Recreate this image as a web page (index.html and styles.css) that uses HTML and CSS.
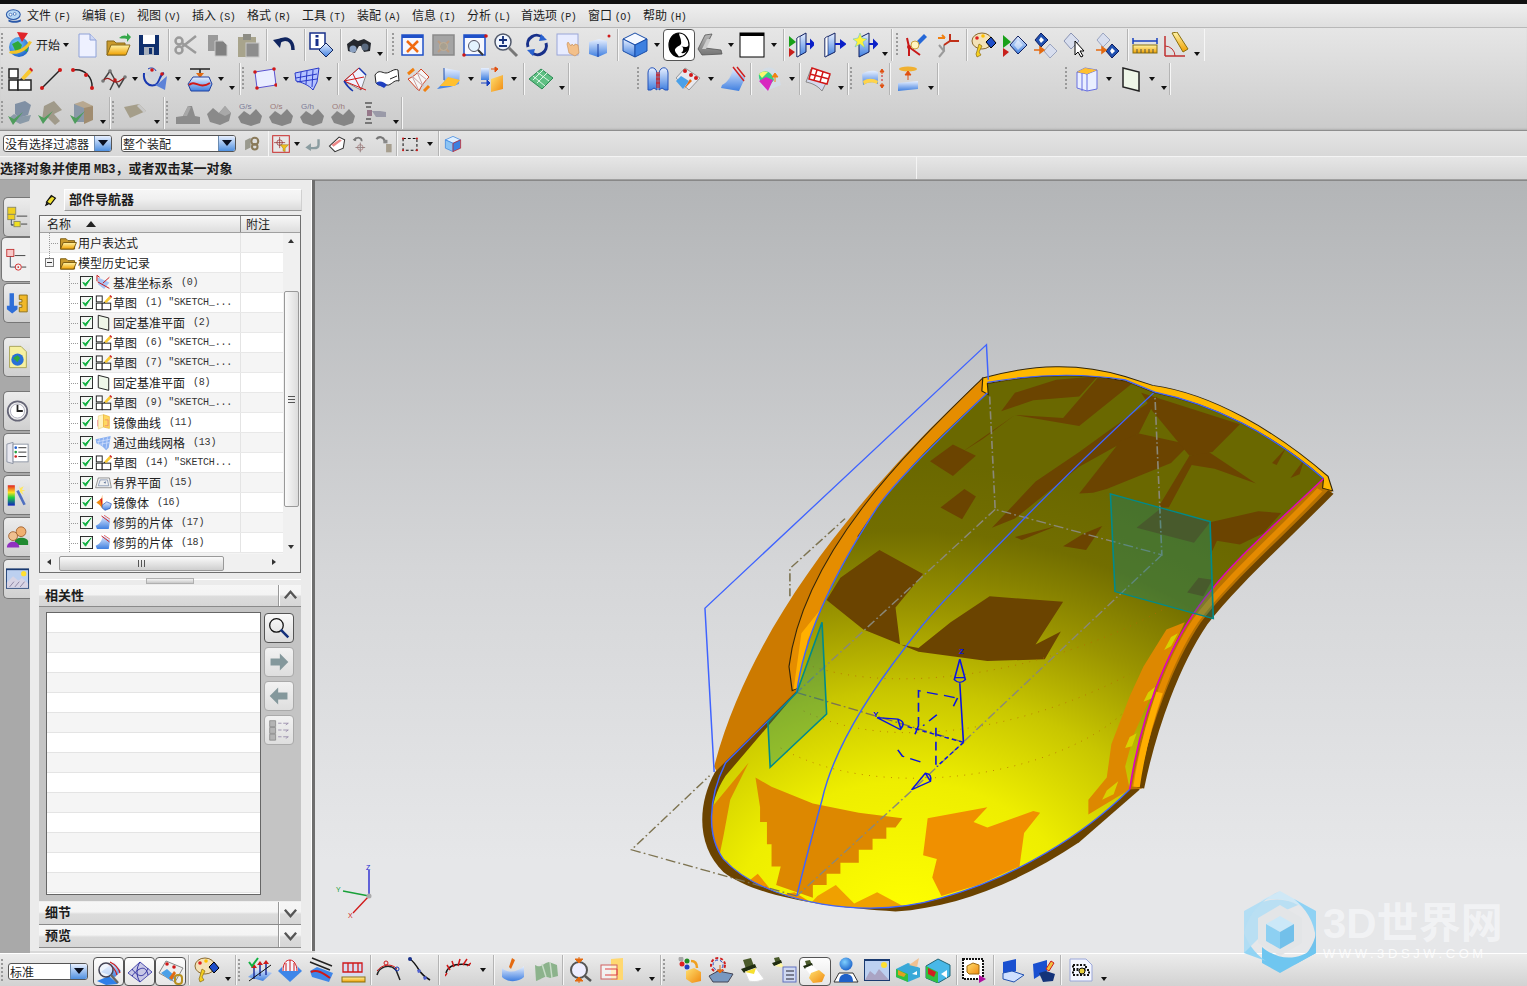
FILE: index.html
```html
<!DOCTYPE html>
<html lang="zh">
<head>
<meta charset="utf-8">
<title>NX 部件导航器</title>
<link rel="stylesheet" href="styles.css">
</head>
<body>
<svg class="defs" aria-hidden="true">
<defs>
<linearGradient id="gB" x1="0" y1="0" x2="0" y2="1"><stop offset="0" stop-color="#e8f0ff"/><stop offset="1" stop-color="#3f7fe0"/></linearGradient>
<linearGradient id="gY" x1="0" y1="0" x2="0" y2="1"><stop offset="0" stop-color="#fff4a8"/><stop offset="1" stop-color="#f0a000"/></linearGradient>
<linearGradient id="gG" x1="0" y1="0" x2="0" y2="1"><stop offset="0" stop-color="#b8b8b8"/><stop offset="1" stop-color="#757575"/></linearGradient>
<linearGradient id="gO" x1="0" y1="0" x2="1" y2="1"><stop offset="0" stop-color="#ffe070"/><stop offset="1" stop-color="#f08a10"/></linearGradient>
<radialGradient id="gW" cx=".4" cy=".35" r=".8"><stop offset="0" stop-color="#7fd0ff"/><stop offset="1" stop-color="#0b4fc0"/></radialGradient>
<symbol id="fold2" viewBox="0 0 18 16"><path d="M1 15V4h6l2 2h7v9z" fill="#c99a2c" stroke="#7a5a10"/><path d="M1 15l3-7h14l-3 7z" fill="url(#gY)" stroke="#7a5a10"/></symbol>
<symbol id="logo" viewBox="0 0 26 26"><circle cx="12" cy="15" r="10" fill="url(#gW)"/><path d="M5 12l6-3 4 4-2 6-4 2-2-5zM17 18l4-3-1 5z" fill="#2fa83a"/><path d="M10 0l11 1-6 9z" fill="#e0242a"/><path d="M2 21c8 3 18-2 23-11l-3-1c-3 6-10 10-19 10z" fill="#f3c428"/></symbol>
<symbol id="doc" viewBox="0 0 26 26"><path d="M5 2h11l6 6v17H5z" fill="#eef1ff" stroke="#8fa2d8"/><path d="M16 2v6h6" fill="#cfd8f4" stroke="#8fa2d8"/></symbol>
<symbol id="fold" viewBox="0 0 26 26"><path d="M2 23V9h7l2 2h9v12z" fill="#c99a2c" stroke="#8a6a1a"/><path d="M2 23l4-10h19l-4 10z" fill="url(#gY)" stroke="#8a6a1a"/><path d="M14 6c3-3 6-3 8-2V1l4 4-4 5V7c-3-1-5 0-8-1z" fill="#35a84a"/></symbol>
<symbol id="save" viewBox="0 0 26 26"><rect x="3" y="3" width="20" height="20" fill="#10306e"/><rect x="7" y="3" width="12" height="9" fill="#fff"/><rect x="8" y="15" width="10" height="8" fill="#a8b0bc"/><rect x="13" y="16" width="3" height="6" fill="#10306e"/></symbol>
<symbol id="cut" viewBox="0 0 26 26"><g fill="none" stroke="#9a9a9a" stroke-width="2.500"><path d="M9 15L23 4M9 11l14 10"/><circle cx="6" cy="9" r="3.500"/><circle cx="6" cy="18" r="3.500"/></g></symbol>
<symbol id="copy" viewBox="0 0 26 26"><path d="M4 3h10v16H4z" fill="#9a9a9a"/><path d="M11 9h8l4 4v11H11z" fill="#808080" stroke="#c8c8c8"/></symbol>
<symbol id="paste" viewBox="0 0 26 26"><rect x="3" y="5" width="18" height="20" fill="#a8a48c"/><rect x="8" y="2" width="8" height="6" fill="#8c8c84"/><rect x="11" y="11" width="13" height="14" fill="#8d8d8d" stroke="#c8c8c8"/></symbol>
<symbol id="undo" viewBox="0 0 26 26"><path d="M7 10c8-6 15-2 15 8" fill="none" stroke="#10255f" stroke-width="3.500"/><path d="M2 8l9-2-2 10z" fill="#10255f"/></symbol>
<symbol id="info" viewBox="0 0 26 26"><rect x="1" y="1" width="15" height="16" fill="#fff" stroke="#18308a" stroke-width="1.500"/><rect x="6.500" y="3" width="3" height="2.500" fill="#18308a"/><rect x="6.500" y="7" width="3" height="7" fill="#18308a"/><path d="M17 11l7 7-7 7-7-7z" fill="url(#gB)" stroke="#10255f"/></symbol>
<symbol id="bino" viewBox="0 0 26 26"><path d="M1 12l7-5 4 2 3-1 3-1 7 4-1 8-6 1-3-6h-2l-4 7-7-2z" fill="#25282e"/><circle cx="7" cy="17" r="3.500" fill="#8aa0c0"/><circle cx="19" cy="15" r="3.500" fill="#5a6a80"/></symbol>
<symbol id="fit" viewBox="0 0 26 26"><rect x="2" y="3" width="21" height="20" fill="#f4f6ff" stroke="#1f50c8" stroke-width="1.500"/><rect x="2" y="3" width="21" height="3" fill="#1f50c8"/><path d="M7 9l11 11M18 9L7 20" stroke="#f06a10" stroke-width="2.500"/></symbol>
<symbol id="fitg" viewBox="0 0 26 26"><rect x="2" y="3" width="21" height="20" fill="#a4a4a4" stroke="#8a8a8a" stroke-width="1.500"/><path d="M7 9l11 11M18 9L7 20" stroke="#bd9c80" stroke-width="2"/><circle cx="12.500" cy="14.500" r="4" fill="#a8a090" stroke="#c0b098"/></symbol>
<symbol id="zr" viewBox="0 0 26 26"><rect x="2" y="3" width="21" height="20" fill="#f6f8ff" stroke="#1f50c8" stroke-width="1.500"/><rect x="2" y="3" width="21" height="3" fill="#1f50c8"/><circle cx="12" cy="14" r="5.500" fill="#e4f4ff" stroke="#556"/><path d="M16 18l5 5" stroke="#333" stroke-width="2"/><circle cx="24" cy="4" r="1.800" fill="#d01818"/><circle cx="2" cy="23" r="1.800" fill="#d01818"/></symbol>
<symbol id="zm" viewBox="0 0 26 26"><circle cx="10" cy="10" r="8" fill="#f0f6ff" stroke="#50586a" stroke-width="1.500"/><path d="M6 8h8M10 4v8M6 14h8" stroke="#14307a" stroke-width="1.800"/><path d="M16 16l8 8" stroke="#777" stroke-width="3"/></symbol>
<symbol id="rot" viewBox="0 0 26 26"><path d="M4 15a9 9 0 0 1 15-9" fill="none" stroke="#18308a" stroke-width="3"/><path d="M22 11a9 9 0 0 1-15 9" fill="none" stroke="#18308a" stroke-width="3"/><path d="M17 2l6 6-8 1zM9 24l-6-6 8-1z" fill="#2a62d0"/></symbol>
<symbol id="pan" viewBox="0 0 26 26"><rect x="2" y="2" width="21" height="21" fill="#e8ecff" stroke="#9aa6d8"/><path d="M12 12l2 9 6 3 4-3-1-8-3-1-1 2-2-2-1 2-3-4z" fill="#f3c08a" stroke="#c68c50" stroke-width=".6"/></symbol>
<symbol id="psp" viewBox="0 0 26 26"><path d="M3 10l10-3 8 2v12l-9 4-9-3z" fill="url(#gB)"/><path d="M12 12v13" stroke="#1a3fa0"/><circle cx="23" cy="4" r="1.500" fill="#d01818"/></symbol>
<symbol id="cube" viewBox="0 0 26 26"><path d="M13 1l12 6-12 6L1 7z" fill="#f4f8ff" stroke="#184ca8"/><path d="M1 7l12 6v12L1 19z" fill="url(#gB)" stroke="#184ca8"/><path d="M25 7l-12 6v12l12-6z" fill="#3d80e0" stroke="#184ca8"/></symbol>
<symbol id="ctr" viewBox="0 0 26 26"><ellipse cx="13" cy="13" rx="10" ry="12" fill="#fff" stroke="#000" stroke-width="1.200"/><path d="M13 1a10 12 0 0 0 0 24c-2-4-6-6-3-9s6-2 5-7c0-3-2-5-2-8z" fill="#000"/><path d="M15 14c3 1 3 5 0 7 6 1 8-4 8-8-2 3-5 2-8 1z" fill="#000"/></symbol>
<symbol id="shd" viewBox="0 0 26 26"><path d="M8 3l7-1-7 14 16 2 1 4-20 1-4-6z" fill="url(#gG)" stroke="#555" stroke-width=".8"/><path d="M5 17l5-10h4L9 17z" fill="#ccc"/></symbol>
<symbol id="wb" viewBox="0 0 26 26"><rect x="1" y="1" width="24" height="24" fill="#fff" stroke="#000"/><rect x="1" y="1" width="24" height="3" fill="#000"/></symbol>
<symbol id="p1" viewBox="0 0 26 26"><path d="M9 6l9-5v19l-9 5z" fill="url(#gB)" stroke="#0e1e60"/><path d="M9 6l3-2v19l-3 2z" fill="#fff" stroke="#0e1e60" stroke-width=".6"/><path d="M1 4l7 6-7 5z" fill="#19a019"/><path d="M1 16l6 4-6 5z" fill="#c8201c"/><path d="M18 12h5M23 9l3 3-3 3z" stroke="#0b20c8" fill="#0b20c8" stroke-width="2"/></symbol>
<symbol id="p2" viewBox="0 0 26 26"><path d="M5 6l10-5v19L5 25z" fill="url(#gB)" stroke="#0e1e60"/><path d="M5 6l3-2v19l-3 2z" fill="#fff" stroke="#0e1e60" stroke-width=".6"/><path d="M15 12h6M21 9l4 3-4 3z" stroke="#0b20c8" fill="#0b20c8" stroke-width="2"/></symbol>
<symbol id="p3" viewBox="0 0 26 26"><path d="M7 6l10-5v19L7 25z" fill="url(#gB)" stroke="#0e1e60"/><path d="M17 12h5M22 9l3 3-3 3z" stroke="#0b20c8" fill="#0b20c8" stroke-width="2"/><path d="M8 1l2 5 5 1-4 3 2 6-5-4-5 3 2-5-4-3 5-1z" fill="#fff23a" stroke="#50c0d0" stroke-width=".5"/></symbol>
<symbol id="c1" viewBox="0 0 26 26"><path d="M6 15v9M6 15l11 8M6 15l-2-9" stroke="#c81818" stroke-width="2" fill="none"/><circle cx="6" cy="15" r="2" fill="#c81818"/><path d="M12 11l9-9 3 3-9 9z" fill="#2668d8"/><circle cx="12" cy="13" r="4" fill="#fff5c0" stroke="#c8a040"/></symbol>
<symbol id="c2" viewBox="0 0 26 26"><path d="M4 13l5 6-5 6M9 19V13" stroke="#9a9a9a" stroke-width="2" fill="none"/><path d="M9 13l6-4h9M15 9V2" stroke="#c03018" stroke-width="2" fill="none"/><path d="M3 6h7M10 6l-3-3" stroke="#f08010" stroke-width="2"/></symbol>
<symbol id="pal" viewBox="0 0 26 26"><ellipse cx="11" cy="9" rx="10" ry="8" fill="#f3e2b8" stroke="#8a6a30"/><circle cx="6" cy="6" r="1.800" fill="#e02020"/><circle cx="12" cy="4" r="1.800" fill="#ffc000"/><path d="M15 10l5-5 5 6-5 5z" fill="#1f4ec8" stroke="#000"/><path d="M8 12l3 2-3 6 2 3-4 2-1-3 1-3z" fill="#f6d020" stroke="#8a6a10" stroke-width=".7"/></symbol>
<symbol id="d1" viewBox="0 0 26 26"><path d="M1 3l8 7-8 6z" fill="#19a019"/><path d="M1 16l6 4-6 5z" fill="#c8201c"/><path d="M16 4l9 9-9 9-8-9z" fill="url(#gB)" stroke="#0e1e60"/><path d="M16 8l5 5-5 5-4-5z" fill="#fff" opacity=".5"/></symbol>
<symbol id="d2" viewBox="0 0 26 26"><path d="M9 1l7 7-7 7-6-7z" fill="#2050b0" stroke="#0e1e60"/><path d="M9 5l3 3-3 3-2-3z" fill="#fff"/><path d="M18 12l7 7-7 7-6-7z" fill="#d8deee" stroke="#9aa4c0"/><path d="M2 18h8M8 15l4 3-4 3z" stroke="#e46a10" fill="#e46a10" stroke-width="1.500"/></symbol>
<symbol id="d3" viewBox="0 0 26 26"><path d="M8 1l8 8-8 8-7-8z" fill="#d8deee" stroke="#8a94b4"/><path d="M12 9v14l3-3 3 5 2-1-3-5h4z" fill="#fff" stroke="#000"/></symbol>
<symbol id="d4" viewBox="0 0 26 26"><path d="M9 1l7 7-7 7-6-7z" fill="#d8deee" stroke="#9aa4c0"/><path d="M18 12l7 7-7 7-6-7z" fill="#2050b0" stroke="#0e1e60"/><path d="M18 16l3 3-3 3-2-3z" fill="#fff"/><path d="M2 18h8M8 15l4 3-4 3z" stroke="#e46a10" fill="#e46a10" stroke-width="1.500"/></symbol>
<symbol id="rul" viewBox="0 0 26 26"><rect x="1" y="13" width="24" height="8" fill="url(#gY)" stroke="#8a7010"/><path d="M5 17v4M9 17v4M13 17v4M17 17v4M21 17v4" stroke="#554"/><path d="M1 9h24M1 6v6M25 6v6" stroke="#1840c0" stroke-width="1.500"/></symbol>
<symbol id="ang" viewBox="0 0 26 26"><path d="M2 24V4M2 24h20" stroke="#c03030" stroke-width="1.500"/><path d="M2 14a10 10 0 0 1 10 10" fill="none" stroke="#c03030"/><path d="M9 1l5-1 11 17-5 3z" fill="url(#gY)" stroke="#8a7010"/></symbol>

<symbol id="sk" viewBox="0 0 26 26"><rect x="2" y="3" width="9" height="9" fill="#fff" stroke="#222" stroke-width="1.500"/><rect x="2" y="14" width="9" height="10" fill="#fff" stroke="#222" stroke-width="1.500"/><rect x="11" y="14" width="13" height="10" fill="#fff" stroke="#222" stroke-width="1.500"/><path d="M14 12l8-9 3 3-8 8z" fill="#f8c830"/><path d="M22 3l1.500-1.500 2.500 2.500L25 6z" fill="#d02020"/><path d="M14 12l-1 2 3-.5z" fill="#222"/></symbol>
<symbol id="ln" viewBox="0 0 26 26"><path d="M4 22L22 4" stroke="#222" stroke-width="1.500"/><circle cx="4" cy="22" r="2" fill="#d01818"/><circle cx="22" cy="4" r="2" fill="#d01818"/></symbol>
<symbol id="arc" viewBox="0 0 26 26"><path d="M3 4c12-2 20 8 19 18" fill="none" stroke="#222" stroke-width="1.500"/><circle cx="3" cy="4" r="2" fill="#d01818"/><circle cx="16" cy="9" r="2" fill="#d01818"/><circle cx="22" cy="22" r="2" fill="#d01818"/></symbol>
<symbol id="ply" viewBox="0 0 26 26"><path d="M2 15L9 5l5 9 4 7 6-10M14 14L9 24" fill="none" stroke="#444" stroke-width="1.500"/><path d="M2 15c5-6 8 0 12 1s6-2 10-5" fill="none" stroke="#a01818" stroke-width="1.200"/><circle cx="2" cy="15" r="1.800" fill="#777"/><circle cx="9" cy="5" r="1.800" fill="#777"/><circle cx="14" cy="14" r="1.800" fill="#c01818"/><circle cx="24" cy="11" r="1.800" fill="#777"/></symbol>
<symbol id="spl" viewBox="0 0 26 26"><path d="M2 7l9-3 14 5-5 14-8-7z" fill="#cfd4dc"/><path d="M2 7c-1 8 4 14 11 12 5-2 4-10 9-12" fill="none" stroke="#1838b0" stroke-width="2"/><path d="M6 3c3-2 7-1 8 2" fill="none" stroke="#1838b0"/><circle cx="10" cy="4" r="1.800" fill="#d01818"/><circle cx="20" cy="8" r="1.800" fill="#d01818"/><path d="M13 19l10 5 2-14-8 7z" fill="#5c82d8"/></symbol>
<symbol id="law" viewBox="0 0 26 26"><path d="M3 3h20M13 3v6" stroke="#222" stroke-width="1.500"/><path d="M9 7h8l-4 5z" fill="#e46a10"/><path d="M1 18l5-7h16l3 7-3 7H4z" fill="url(#gB)" stroke="#2040a0"/><path d="M2 19c6-6 10 5 21-2" fill="none" stroke="#d01818" stroke-width="2"/></symbol>
<symbol id="rc" viewBox="0 0 26 26"><path d="M4 6l19-3 2 16-19 3z" fill="#eaedff" stroke="#5a52d0"/><circle cx="4" cy="6" r="1.800" fill="#d01818"/><circle cx="23" cy="3" r="1.800" fill="#d01818"/><circle cx="25" cy="19" r="1.800" fill="#d01818"/><circle cx="6" cy="22" r="1.800" fill="#d01818"/></symbol>
<symbol id="gs" viewBox="0 0 26 26"><path d="M1 7l24-5-2 14-4 8c-4-5-12-8-17-9z" fill="#b4c2ff" stroke="#2838c8"/><path d="M7 6l-1 10M13 5l-1 13M19 4l-1 17M2 12l21-4M3 16l20-3" stroke="#2838c8" fill="none"/></symbol>
<symbol id="w1" viewBox="0 0 26 26"><path d="M2 15L17 2l7 7-5 15z" fill="#eef2ff" stroke="#888"/><path d="M2 15L24 24M11 8l8 16M2 15L17 2M2 15l20-4" stroke="#d01818" fill="none"/><path d="M2 15c3 5 6 8 9 10" stroke="#1838b0" fill="none" stroke-width="1.500"/><path d="M17 2l7 7" stroke="#1838b0" stroke-width="1.500"/></symbol>
<symbol id="w2" viewBox="0 0 26 26"><path d="M1 9c4-6 7-2 11-2s8-5 12-3l1 11c-5-2-8 5-12 4S5 21 2 17z" fill="#fff" stroke="#222"/><path d="M2 17c4-3 8-1 11 2l-3 3c-3-2-7-3-8-5z" fill="#2040c0"/><path d="M16 13l7-3" stroke="#222"/></symbol>
<symbol id="w3" viewBox="0 0 26 26"><path d="M3 13c5-2 10-6 13-10l8 8c-4 4-8 9-10 14z" fill="#f6f6f6" stroke="#d04020"/><path d="M7 10l11 10M12 6l10 8M14 25L7 10M18 20l-6-14" stroke="#c8a0a0"/><path d="M3 8l6-5M19 25l5-5" stroke="#f08010" stroke-width="3"/></symbol>
<symbol id="w4" viewBox="0 0 26 26"><path d="M8 2l16 3-1 13-9 3-13 2 7-7z" fill="url(#gB)"/><path d="M4 20l8-9 12 3-5 6z" fill="#ffc030"/><path d="M8 2v12" stroke="#2050b0"/></symbol>
<symbol id="w5" viewBox="0 0 26 26"><path d="M3 2h8v12H3z" fill="url(#gB)"/><path d="M13 13l12-4v14l-12 3z" fill="url(#gO)"/><path d="M3 17h8M9 14l3 3-3 3z" stroke="#1840c0" fill="#1840c0"/><path d="M13 3h6M17 1l3 2-3 3z" stroke="#e05010" fill="#e05010"/></symbol>
<symbol id="gr" viewBox="0 0 26 26"><path d="M1 13L13 3l12 9-11 11z" fill="#5fbf83" stroke="#2a8a52"/><path d="M5 10l12 10M9 6l12 9M9 17L19 7M5 14L15 4" stroke="#dff5e6"/></symbol>
<symbol id="t1" viewBox="0 0 26 26"><path d="M3 7c0-7 8-7 9 0v17l-3-2-3 2H3zM14 7c1-7 9-7 9 0v17h-3l-3-2-3 2z" fill="url(#gB)" stroke="#2452b8"/><path d="M12 6v16M14 6v16M11 9h4M11 13h4M11 17h4" stroke="#d01818" fill="none"/></symbol>
<symbol id="t2" viewBox="0 0 26 26"><path d="M10 2l15 10-11 12L1 12z" fill="#e8e8ee" stroke="#999"/><circle cx="10" cy="5" r="2" fill="#d01818"/><circle cx="16" cy="9" r="2" fill="#d01818"/><circle cx="21" cy="12" r="2" fill="#d01818"/><path d="M1 15l5-5 8 5-6 8z" fill="#4aa0e8"/><path d="M9 23l6-10 2 2z" fill="#e46a10"/></symbol>
<symbol id="t3" viewBox="0 0 26 26"><path d="M13 1l12 11-6 13L1 22l1-3c6-3 10-9 11-18z" fill="url(#gB)"/><path d="M13 1l11 14M17 1l8 10" stroke="#d02020" stroke-width="1.500"/></symbol>
<symbol id="t4" viewBox="0 0 26 26"><path d="M3 8C8-1 18 0 22 7l3 12-15 6C4 20 2 15 3 8z" fill="#d4dde6"/><path d="M3 8c5-5 13-3 15 6l-7 8C6 18 2 14 3 8z" fill="#36d080"/><path d="M3 15l9 10 5-11-7-3z" fill="#d828c0"/><path d="M3 8c3-3 6-3 9-2L6 12z" fill="#f8f870"/><path d="M19 8v8M16 11l3-4 3 4z" stroke="#f08010" fill="#f08010"/></symbol>
<symbol id="t5" viewBox="0 0 26 26"><path d="M6 3l19 6-8 16C12 19 6 17 1 16z" fill="#d4d8ec" stroke="#888"/><path d="M7 2l18 6-3 10L4 13zM12 4l-3 10M18 6l-3 10M5 8l19 5" fill="#fff" stroke="#d01818" stroke-width="1.500"/></symbol>
<symbol id="t6" viewBox="0 0 26 26"><path d="M2 8c6-4 12-4 16-2v12c-5-3-11-2-15 1z" fill="url(#gB)"/><path d="M3 15c5-3 10-3 15 0l-1 3c-5-2-9-2-13 1z" fill="#ffd44a"/><path d="M22 3v5M20 6l2-3 2 3zM22 22v-5M20 19l2 3 2-3z" stroke="#e05010" fill="#e05010"/><path d="M22 9v8" stroke="#d01818" stroke-dasharray="2 2"/></symbol>
<symbol id="t7" viewBox="0 0 26 26"><ellipse cx="13" cy="3" rx="9" ry="2.500" fill="#f0b030"/><path d="M13 7v7M10 9l3-4 3 4z" stroke="#e05010" fill="#e05010"/><path d="M3 17l20-2v8L3 25z" fill="url(#gB)"/></symbol>
<symbol id="t8" viewBox="0 0 26 26"><path d="M3 6l8-4 12 2v19l-10 2-10-3z" fill="#eaefff" stroke="#6870e0"/><path d="M3 6l10 2 10-4M13 8v17M8 7v18" stroke="#6870e0" fill="none"/><path d="M3 6l8-4 12 2-10 4z" fill="#ffc030"/></symbol>
<symbol id="dp" viewBox="0 0 26 26"><path d="M5 2l16 4v19L5 21z" fill="#eef6e8" stroke="#222" stroke-width="1.500"/></symbol>
<symbol id="csy" viewBox="0 0 26 26"><path d="M4 5l18 8-8 10-9-7z" fill="#a8c4f4"/><path d="M3 2v9M3 2l4 3M4 12l18 10M12 14l10-9" stroke="#c81818" stroke-width="1.500" fill="none"/></symbol>
<symbol id="mc" viewBox="0 0 26 26"><path d="M5 3l8-2v19l-8 3z" fill="#fff4c0" stroke="#e8d080"/><path d="M13 1l9 3v18l-9-2z" fill="#ffd860" stroke="#e8b030"/><path d="M4 9v10M15 9h5v9h-5" stroke="#e87070" fill="none"/></symbol>
<symbol id="ms" viewBox="0 0 26 26"><path d="M1 8l23-5-3 18-4 4c-4-5-9-9-15-11z" fill="#8ab0f0"/><path d="M7 7l-2 9M13 6l-2 13M19 5l-2 17M3 12l20-4M6 16l16-3" stroke="#dce6ff" fill="none"/></symbol>
<symbol id="bp" viewBox="0 0 26 26"><path d="M5 6h17l3 15H1z" fill="#f0f0f0" stroke="#666"/><path d="M8 9h11l2 9H5z" fill="none" stroke="#667ba0"/><path d="M13 13l4-2-1 4z" fill="#667ba0"/></symbol>
<symbol id="mb" viewBox="0 0 26 26"><path d="M2 13l8-6 1-6 1 22-5-6z" fill="#f08a10"/><path d="M8 8l3-2v14z" fill="#e02020"/><path d="M11 17l7-5 7 3-2 7-8 3-4-4z" fill="url(#gB)" stroke="#2050b0"/></symbol>
<symbol id="tr" viewBox="0 0 26 26"><path d="M12 2l11 8-2 13L3 23l-2-5c6-2 10-8 11-16z" fill="url(#gB)"/><path d="M10 3l12 9" stroke="#d02020" stroke-width="1.500"/><path d="M14 2l9 6" stroke="#d02020"/></symbol>
<symbol id="ck" viewBox="0 0 14 14"><rect x=".5" y=".5" width="13" height="13" fill="#f4f8f4" stroke="#222"/><path d="M3 7l3 4 6-9-6 6z" fill="#10b040" stroke="#10b040"/></symbol>
<symbol id="a1" viewBox="0 0 26 26"><path d="M8 4l10-3 6 4-3 10-9 3-4-4z" fill="#8090a4"/><path d="M2 18l5-4 5 3 12-2-2 6-9 3z" fill="#8a9aa8"/><path d="M1 16l5 9 10-13-9 7z" fill="#4e9c5c"/></symbol>
<symbol id="a2" viewBox="0 0 26 26"><path d="M7 6l10-5 8 9-8 4 6 7-5 4-7-7-6 2z" fill="#a09a8a"/><path d="M1 15l5 9 10-13-9 7z" fill="#4e9c5c"/></symbol>
<symbol id="a3" viewBox="0 0 26 26"><path d="M5 4h10v18H5z" fill="#8a98a8"/><path d="M15 4l9 2v14l-9 4z" fill="#a08c70"/><path d="M5 4l9-3 10 5-9 2z" fill="#b8a890"/><path d="M1 15l5 9 10-13-9 7z" fill="#4e9c5c"/></symbol>
<symbol id="tag" viewBox="0 0 26 26"><path d="M2 7l15-3 7 7-16 7z" fill="#a59e8a"/><path d="M17 4l7 7-2 2-7-7z" fill="#c8c8c8"/></symbol>
<symbol id="b1" viewBox="0 0 26 26"><path d="M1 24V17l7-1 5-10h4l3 10 5 1v7z" fill="#8c8c8c"/><path d="M8 16l5-10 3 1-4 9z" fill="#a8a8a8"/></symbol>
<symbol id="b2" viewBox="0 0 26 26"><path d="M1 14l6-6 6 5 6-7 6 7-2 8-9 4-10-3z" fill="#8a8a8a"/><path d="M13 13l6-7 6 7-6 3z" fill="#a8a8a8"/></symbol>
<symbol id="b3" viewBox="0 0 26 26"><path d="M1 17l6-6 6 4 6-6 6 7-2 7-9 3-10-3z" fill="#858585"/><text class="gl" x="2" y="9" fill="#7a7a98">G/s</text></symbol>
<symbol id="b4" viewBox="0 0 26 26"><path d="M1 17l6-6 6 4 6-6 6 7-2 7-9 3-10-3z" fill="#858585"/><text class="gl" x="2" y="9" fill="#9c7a7a">O/s</text></symbol>
<symbol id="b6" viewBox="0 0 26 26"><path d="M1 17l6-6 6 4 6-6 6 7-2 7-9 3-10-3z" fill="#858585"/><text class="gl" x="2" y="9" fill="#7a7a98">G/h</text></symbol>
<symbol id="b7" viewBox="0 0 26 26"><path d="M1 17l6-6 6 4 6-6 6 7-2 7-9 3-10-3z" fill="#858585"/><text class="gl" x="2" y="9" fill="#9c7a7a">O/h</text></symbol>
<symbol id="b5" viewBox="0 0 26 26"><path d="M3 3h7M3 23h7M4 7h5M4 19h5" stroke="#777" stroke-width="2"/><path d="M5 10h5v6H5z" fill="#96788a"/><path d="M10 11h8l6 1v5H14z" fill="#9a9aa8"/></symbol>
<symbol id="lnk" viewBox="0 0 26 26"><path d="M3 8l8-4v14l-8 4z" fill="#9a9a8e"/><circle cx="17" cy="9" r="5" fill="none" stroke="#8a7a5a" stroke-width="3"/><circle cx="17" cy="17" r="4" fill="none" stroke="#8a7a5a" stroke-width="3"/></symbol>
<symbol id="flt" viewBox="0 0 26 26"><rect x="1" y="1" width="24" height="24" fill="#e8e8e8" stroke="#c83030" stroke-width="1.500"/><path d="M11 3v16M3 11h16" stroke="#902020"/><circle cx="11" cy="11" r="4" fill="none" stroke="#902020"/><path d="M12 14h12l-5 5v5l-3-1v-4z" fill="#f0c020" stroke="#806010" stroke-width=".6"/></symbol>
<symbol id="bk" viewBox="0 0 26 26"><path d="M21 6v8c0 4-3 5-7 5H9" fill="none" stroke="#8a9ca0" stroke-width="3.500"/><path d="M2 18l8-6v11z" fill="#8a9ca0"/></symbol>
<symbol id="sc" viewBox="0 0 26 26"><path d="M2 16L16 3l8 4-2 12-12 5z" fill="#fff" stroke="#333" stroke-width="1.500"/><path d="M5 14l12-8 3 2L8 17z" fill="#e88"/></symbol>
<symbol id="lc" viewBox="0 0 26 26"><path d="M12 11v14M5 18h14" stroke="#9a8a8a" stroke-width="1.500"/><circle cx="12" cy="18" r="4" fill="none" stroke="#a07070"/><path d="M3 8c4-6 11-5 11 1" fill="none" stroke="#777" stroke-width="2.500"/><path d="M1 7l5-4v6z" fill="#777"/></symbol>
<symbol id="lv" viewBox="0 0 26 26"><path d="M2 6c4-5 10-3 12 2" fill="none" stroke="#777" stroke-width="3"/><path d="M12 7h6v5h-6z" fill="#888"/><path d="M16 13h8v12h-8z" fill="#a69e8e"/></symbol>
<symbol id="dr" viewBox="0 0 26 26"><path d="M3 5h20v17H3z" fill="none" stroke="#111" stroke-width="1.500" stroke-dasharray="4 3"/><circle cx="3" cy="5" r="1.500" fill="#d01818"/><circle cx="23" cy="5" r="1.500" fill="#d01818"/><circle cx="3" cy="22" r="1.500" fill="#d01818"/><circle cx="23" cy="22" r="1.500" fill="#d01818"/></symbol>
<symbol id="sel" viewBox="0 0 26 26"><path d="M13 2l11 5-11 5L2 7z" fill="#e0f0ff" stroke="#3080e0"/><path d="M2 7l11 5v12L2 19z" fill="#8cc4f4" stroke="#3080e0"/><path d="M24 7l-11 5v12l11-5z" fill="#3c80e0" stroke="#d01818"/></symbol>
<symbol id="z1" viewBox="0 0 26 26"><path d="M5 13L18 3l7 9-6 6z" fill="url(#gB)"/><path d="M1 22l12-5 9 8-12 1z" fill="#2f7fe8"/><path d="M14 3c6 3 9 7 10 11M12 5c6 3 8 7 9 11" stroke="#d01818" fill="none" stroke-width="1.200"/><circle cx="10" cy="11" r="7" fill="#eef5ff" fill-opacity=".7" stroke="#445" stroke-width="1.500"/><path d="M15 16l7 8" stroke="#666" stroke-width="2.500"/></symbol>
<symbol id="z2" viewBox="0 0 26 26"><path d="M1 14L13 3l12 10-12 10z" fill="#c8c8e6" stroke="#5050b0"/><path d="M5 10c6 8 12 10 16-1M5 17c6-8 14-12 16-1M13 3c-4 6-4 14 0 20" fill="none" stroke="#3030a0"/></symbol>
<symbol id="z3" viewBox="0 0 26 26"><path d="M8 2l17 7-8 14L1 14z" fill="#eee" stroke="#888"/><circle cx="9" cy="5" r="1.800" fill="#d01818"/><circle cx="16" cy="8" r="1.800" fill="#d01818"/><path d="M3 14l6-4 9 8-5 4z" fill="#4aa0e8"/><path d="M11 19l5-7 2 2-4 7z" fill="#e46a10"/><rect x="17" y="16" width="7" height="9" rx="3" fill="none" stroke="#b89020" stroke-width="2"/></symbol>
<symbol id="e1" viewBox="0 0 26 26"><path d="M1 20L12 11l13 5-9 8z" fill="url(#gB)"/><path d="M7 10v12M13 7v12M19 6v12" stroke="#20309a" stroke-width="1.500"/><path d="M4 11l3-4 3 4M10 8l3-4 3 4M16 7l3-4 3 4" fill="#d01818"/><path d="M2 5l3 4 6-8" fill="none" stroke="#10b040" stroke-width="2"/><path d="M2 24L24 8" stroke="#111"/></symbol>
<symbol id="e2" viewBox="0 0 26 26"><path d="M1 14L13 2l12 12-12 11z" fill="#3f86e8"/><path d="M5 15c0-10 4-13 8-13s8 5 8 12H5z" fill="#f4f6ff"/><path d="M6 14c0-8 3-11 7-11s7 5 7 11M9 14V6M13 14V3M17 14V6" stroke="#d01818" fill="none"/></symbol>
<symbol id="e3" viewBox="0 0 26 26"><path d="M4 1l20 8M2 5l20 8" stroke="#222" stroke-width="1.500"/><path d="M2 14l7-4 16 6-4 9-17-5z" fill="#3f86e8"/><path d="M3 15c6-3 12 1 19 6" fill="none" stroke="#d01818" stroke-width="2"/></symbol>
<symbol id="e4" viewBox="0 0 26 26"><path d="M2 4l22 2v14H2z" fill="#d8dcf0"/><path d="M3 6h19v9H3zM8 6v9M13 6v9M18 6v9" fill="none" stroke="#d01818" stroke-width="1.300"/><rect x="2" y="20" width="23" height="5" fill="url(#gY)" stroke="#8a7010"/></symbol>
<symbol id="f1" viewBox="0 0 26 26"><path d="M1 18c2-8 12-12 19-5l4 10" fill="none" stroke="#222" stroke-width="1.500"/><path d="M1 14c5-7 15-8 20-2" fill="none" stroke="#d01818"/><circle cx="10" cy="6" r="2" fill="none" stroke="#d01818"/><circle cx="21" cy="12" r="2" fill="none" stroke="#1838b0"/></symbol>
<symbol id="f2" viewBox="0 0 26 26"><path d="M3 2c4 3 6 6 9 11s6 7 11 10" fill="none" stroke="#111" stroke-width="1.500"/><circle cx="3" cy="2" r="2" fill="#18308a"/><path d="M10 13l3-1 1 3-3 1zM16 20l3-1 1 3-3 1z" fill="#5060d0"/></symbol>
<symbol id="g1" viewBox="0 0 26 26"><path d="M1 16c2-7 10-10 24-8" fill="none" stroke="#111" stroke-width="1.500"/><path d="M5 13L2 8M9 10l-2-6M13 9l2-7M18 8l4-6M22 9l4-3M2 16l-2 3" stroke="#d01818" stroke-width="1.500"/></symbol>
<symbol id="h1" viewBox="0 0 26 26"><path d="M2 11c6 6 16 4 22-2v11c-5 5-16 6-22 0z" fill="url(#gB)"/><path d="M12 1l3 2-4 9-2-2z" fill="#e46a10"/></symbol>
<symbol id="h2" viewBox="0 0 26 26"><path d="M2 8c6 4 8-2 14-3l8 3 1 11-8 2c-6-3-8 1-14 3z" fill="#8cb38c"/><path d="M9 7l4 13M17 5l2 16" stroke="#c8dcc8" stroke-width="1.500"/></symbol>
<symbol id="i1" viewBox="0 0 26 26"><circle cx="12" cy="13" r="8" fill="#eef" stroke="#555" stroke-width="2"/><path d="M18 19l6 5" stroke="#555" stroke-width="2.500"/><path d="M12 0v4M8 2h8l-4 4zM12 26v-4M8 24h8l-4-4z" fill="#e46a10" stroke="#e46a10"/></symbol>
<symbol id="i2" viewBox="0 0 26 26"><path d="M12 2l12-1v22H12z" fill="#ffd870"/><rect x="2" y="8" width="16" height="14" fill="#fff" fill-opacity=".6" stroke="#d06060"/><path d="M6 12h12v6H6" fill="none" stroke="#e04040"/></symbol>
<symbol id="j1" viewBox="0 0 26 26"><path d="M9 14l8-3 7 4v9l-9 2-6-4z" fill="url(#gO)"/><circle cx="5" cy="7" r="2.500" fill="#e02020"/><circle cx="10" cy="4" r="2.500" fill="#228a22"/><circle cx="10" cy="10" r="2.500" fill="#2040c0"/><circle cx="4" cy="2" r="2.500" fill="#111" fill-opacity=".3"/><path d="M14 4c4 0 6 2 6 7" fill="none" stroke="#f0a020" stroke-width="2.500"/></symbol>
<symbol id="j2" viewBox="0 0 26 26"><circle cx="10" cy="8" r="7" fill="none" stroke="#d02020" stroke-width="2" stroke-dasharray="3 2"/><circle cx="10" cy="8" r="5" fill="none" stroke="#2040c0" stroke-dasharray="3 2"/><path d="M1 19l9-5 15 3-5 8H5z" fill="#7898c0" stroke="#445"/><path d="M12 8v8M9 13l3 3 3-3z" stroke="#e46a10" fill="#e46a10"/></symbol>
<symbol id="j3" viewBox="0 0 26 26"><path d="M3 3l8-2 3 8-8 3z" fill="#4a5a2a"/><path d="M1 12l14-5 2 5-13 4z" fill="#1f2c10"/><path d="M5 15l11-4 8 11c-5 3-11 3-15 2z" fill="#fff" stroke="#ddd"/><path d="M5 15l11-4-2 6z" fill="#f6e030"/></symbol>
<symbol id="j4" viewBox="0 0 26 26"><path d="M3 1l5-1 2 5-5 2z" fill="#4a5a2a"/><path d="M1 6l9-3 1 3-8 3z" fill="#1f2c10"/><path d="M4 9l6-3 4 5z" fill="#fff6a0"/><rect x="12" y="10" width="13" height="15" fill="#cfd8f0" stroke="#6070c0"/><path d="M15 14h8M15 18h8M15 22h8" stroke="#223"/></symbol>
<symbol id="j5" viewBox="0 0 26 26"><path d="M3 2l5-1 2 5-5 2z" fill="#4a5a2a"/><path d="M1 7l9-3 1 3-8 3z" fill="#1f2c10"/><path d="M3 9l7-3 8 8-8 4z" fill="#fff"/><path d="M9 14l8-3 6 5-3 7-9 1-4-5z" fill="url(#gO)"/></symbol>
<symbol id="j6" viewBox="0 0 26 26"><circle cx="13" cy="7" r="6.500" fill="url(#gW)"/><path d="M6 16h14l5 9H1z" fill="#fff" stroke="#333"/><path d="M6 25c0-6 3-8 7-8s7 2 7 8z" fill="#1f60c8"/></symbol>
<symbol id="j7" viewBox="0 0 26 26"><rect x="0" y="2" width="26" height="22" fill="#1a3a70"/><rect x="1" y="4" width="24" height="19" fill="#bcd0f0"/><path d="M1 23l5-9 5 4 4-6 10 11z" fill="#aaa4c4"/><circle cx="20" cy="8" r="3" fill="#ffe030"/></symbol>
<symbol id="j8" viewBox="0 0 26 26"><path d="M1 12l12-6 12 5v9l-12 5-12-5z" fill="#38a8d8"/><path d="M1 12l12 5v8L1 20z" fill="#30c040"/><path d="M3 13l8 4-2 3-6-2z" fill="#e0a020"/><path d="M14 8l10-7-2 9z" fill="#f0c090"/><path d="M17 17l5-3v4z" fill="#fff"/></symbol>
<symbol id="j9" viewBox="0 0 26 26"><path d="M1 9l12-7 12 6v11l-12 7-12-5z" fill="#48b8e8" stroke="#267"/><path d="M1 9l12 6v11L1 21z" fill="#30c040"/><path d="M3 11l8 4-2 5-6-3z" fill="#d02020"/><path d="M16 17l6-4v8z" fill="#fff"/></symbol>
<symbol id="k1" viewBox="0 0 26 26"><rect x="2" y="2" width="20" height="20" fill="#fff" stroke="#111" stroke-width="2" stroke-dasharray="2 1"/><path d="M6 9l6-3 6 2v9H8l-2-2z" fill="url(#gO)" stroke="#a06a10"/><path d="M18 18l7 4-7 4z" fill="#b010a0"/></symbol>
<symbol id="k2" viewBox="0 0 26 26"><path d="M4 5l13-3v12l-13 8z" fill="#1a50d0"/><path d="M4 16l9-2 12 4-10 7-11-3z" fill="#cfe0ff" stroke="#2050b0"/></symbol>
<symbol id="k3" viewBox="0 0 26 26"><path d="M2 7l14-4v11L3 22z" fill="#1a50d0"/><path d="M8 16l7-2 9 3-2 7-10 1z" fill="#14337a"/><path d="M15 12l5-8 3 2-5 8z" fill="#f0c040" stroke="#d01818"/></symbol>
<symbol id="k4" viewBox="0 0 26 26"><path d="M2 2h16l6 6v16H2z" fill="#f4f6ff" stroke="#9aa6d8"/><path d="M5 8h13v4H5zM5 13h16v5H5z" fill="none" stroke="#111" stroke-width="2" stroke-dasharray="2 1.500"/><circle cx="14" cy="14" r="3" fill="#e8d040" stroke="#111"/></symbol>
<symbol id="t_a" viewBox="0 0 26 26"><rect x="2" y="2" width="9" height="8" fill="#f0d020" stroke="#886"/><rect x="2" y="10" width="8" height="6" fill="#f0d020" stroke="#886"/><path d="M12 12h12" stroke="#333"/><path d="M6 16v6h3M6 22h2" stroke="#345" fill="none"/><rect x="9" y="18" width="7" height="6" fill="#f0e020" stroke="#886"/><path d="M17 21h7" stroke="#333"/></symbol>
<symbol id="t_b" viewBox="0 0 26 26"><rect x="2" y="1" width="8" height="8" fill="#f8c8c8" stroke="#c03030"/><path d="M11 8h12" stroke="#333"/><path d="M6 9v12h6" stroke="#345" fill="none"/><circle cx="15" cy="21" r="3.500" fill="none" stroke="#d02020"/><circle cx="15" cy="21" r="1" fill="#d02020"/><path d="M19 21h5" stroke="#333"/></symbol>
<symbol id="t_c" viewBox="0 0 26 26"><path d="M4 2h5v14h4v4l-6 5-6-5v-4h3z" fill="#2e6ed8"/><path d="M15 4h9v19h-9v-5h3v-3h-3v-3h3V9h-3z" fill="#f0b828" stroke="#8a6a10"/></symbol>
<symbol id="t_d" viewBox="0 0 26 26"><path d="M4 1h13l6 6v18H4z" fill="#f6f0a0" stroke="#a4a050"/><circle cx="13" cy="16" r="7" fill="#2a70d8"/><path d="M8 14l5-3 3 3-3 5z" fill="#30a840"/></symbol>
<symbol id="t_e" viewBox="0 0 26 26"><circle cx="13" cy="13" r="11" fill="#f0f0f0" stroke="#667" stroke-width="2"/><circle cx="13" cy="13" r="8" fill="#fff" stroke="#aab"/><path d="M13 6v7h6" stroke="#222" stroke-width="2" fill="none"/></symbol>
<symbol id="t_f" viewBox="0 0 26 26"><path d="M1 3l7-2v24l-7-2z" fill="#e8e8f0" stroke="#8890a0"/><rect x="8" y="3" width="17" height="20" fill="#fff" stroke="#8890a0"/><circle cx="11" cy="7" r="1.500" fill="#2060d0"/><circle cx="11" cy="12" r="1.500" fill="#20a040"/><circle cx="11" cy="17" r="1.500" fill="#d02020"/><path d="M14 7h9M14 12h9M14 17h9" stroke="#222"/></symbol>
<symbol id="t_g" viewBox="0 0 26 26"><defs><linearGradient id="rb" x1="0" y1="0" x2="0" y2="1"><stop offset="0" stop-color="#e02020"/><stop offset=".35" stop-color="#ffe020"/><stop offset=".6" stop-color="#20d040"/><stop offset="1" stop-color="#1020c0"/></linearGradient></defs><rect x="2" y="2" width="8" height="23" fill="url(#rb)"/><path d="M13 8l8 16" stroke="#5070c0" stroke-width="3"/><path d="M15 2l1 3 4-2-2 4 4 1-4 1 2 4-4-3z" fill="#ffe860"/></symbol>
<symbol id="t_h" viewBox="0 0 26 26"><circle cx="17" cy="7" r="5.500" fill="#f0b070" stroke="#a06030"/><path d="M10 18c0-5 14-6 15 0v4H10z" fill="#208a30"/><circle cx="8" cy="12" r="5" fill="#f0c090" stroke="#a06030"/><path d="M1 25c0-9 14-9 14 0z" fill="#9030c0"/></symbol>
<symbol id="t_i" viewBox="0 0 26 26"><rect x="0" y="1" width="26" height="23" fill="#1a3a70"/><rect x="1" y="3" width="24" height="20" fill="#bcd0f0"/><path d="M1 23V17l7-7 6 5 4-3 7 6v5z" fill="#d8d4e4"/><path d="M4 22l5-6M10 22l5-6M16 22l5-6" stroke="#8880a0"/><circle cx="20" cy="7" r="3" fill="#ffe030"/></symbol>
<symbol id="mg" viewBox="0 0 26 26"><circle cx="10" cy="10" r="8" fill="none" stroke="#111" stroke-width="1.500"/><path d="M15 15l9 9" stroke="#14307a" stroke-width="3"/></symbol>
<symbol id="rarr" viewBox="0 0 26 26"><path d="M3 9h11V3l10 10-10 10v-6H3z" fill="#84989c"/></symbol>
<symbol id="larr" viewBox="0 0 26 26"><path d="M23 9H12V3L2 13l10 10v-6h11z" fill="#84989c"/></symbol>
<symbol id="tre" viewBox="0 0 26 26"><path d="M2 2h7v7H2zM2 10h7v7H2zM2 18h7v7H2z" fill="#b4b4b4" stroke="#8c8c8c"/><path d="M12 5h4M18 5h6M21 7l3-2M12 13h4M18 13h6M21 15l3-2M12 21h4M18 21h6M21 23l3-2" stroke="#968aa8" fill="none"/></symbol>
<symbol id="pin" viewBox="0 0 16 16"><path d="M3 10l6-8 5 3-6 8z" fill="#f0e030" stroke="#111" stroke-width="1.500"/><path d="M6 6l4-3" stroke="#111"/><path d="M3 10l-2 5 5-2z" fill="#111"/></symbol>
<symbol id="chu" viewBox="0 0 16 16"><path d="M2 11l6-7 6 7" fill="none" stroke="#555" stroke-width="2.500"/></symbol>
<symbol id="chd" viewBox="0 0 16 16"><path d="M2 4l6 7 6-7" fill="none" stroke="#555" stroke-width="2.500"/></symbol>
<symbol id="menu" viewBox="0 0 26 26"><ellipse cx="12" cy="11" rx="10" ry="7" fill="#b8d8f4" stroke="#2a58a8" stroke-width="1.500"/><circle cx="8" cy="11" r="2" fill="#fff" stroke="#2a58a8"/><circle cx="14" cy="10" r="2" fill="#fff" stroke="#2a58a8"/><path d="M5 18c4 2 11 3 18 0v3c-6 3-14 2-18 0z" fill="#2a58a8"/></symbol>
</defs>
</svg>

<div class="blk"></div>
<div class="menubar">
<svg class="mi"><use href="#menu"/></svg>
<span class="mn">文件 <em>(F)</em></span><span class="mn">编辑 <em>(E)</em></span><span class="mn">视图 <em>(V)</em></span><span class="mn">插入 <em>(S)</em></span><span class="mn">格式 <em>(R)</em></span><span class="mn">工具 <em>(T)</em></span><span class="mn">装配 <em>(A)</em></span><span class="mn">信息 <em>(I)</em></span><span class="mn">分析 <em>(L)</em></span><span class="mn mn2">首选项 <em>(P)</em></span><span class="mn mn3">窗口 <em>(O)</em></span><span class="mn">帮助 <em>(H)</em></span>
</div>

<div class="bars">
<div class="tb">
<b class="gr w6"></b>
<i class="t w28"><svg class="ic"><use href="#logo"/></svg></i><span class="t w26 st">开始</span><b class="t w11 ar"></b>
<i class="t w31"><svg class="ic"><use href="#doc"/></svg></i><i class="t w31"><svg class="ic"><use href="#fold"/></svg></i><i class="t w31"><svg class="ic"><use href="#save"/></svg></i><b class="s w6"></b>
<i class="t w31"><svg class="ic"><use href="#cut"/></svg></i><i class="t w31"><svg class="ic"><use href="#copy"/></svg></i><i class="t w31"><svg class="ic"><use href="#paste"/></svg></i><b class="s w5"></b>
<i class="t w31"><svg class="ic"><use href="#undo"/></svg></i><b class="s w7"></b>
<i class="t w31"><svg class="ic"><use href="#info"/></svg></i><b class="s w5"></b>
<i class="t w34"><svg class="ic"><use href="#bino"/></svg></i><b class="t w8 ar lo"></b><b class="s w4"></b><b class="w3"></b><b class="gr w6"></b>
<i class="t w31"><svg class="ic"><use href="#fit"/></svg></i><i class="t w31"><svg class="ic"><use href="#fitg"/></svg></i><i class="t w31"><svg class="ic"><use href="#zr"/></svg></i><i class="t w31"><svg class="ic"><use href="#zm"/></svg></i><i class="t w31"><svg class="ic"><use href="#rot"/></svg></i><i class="t w31"><svg class="ic"><use href="#pan"/></svg></i><i class="t w31"><svg class="ic"><use href="#psp"/></svg></i><b class="s w5"></b>
<i class="t w32"><svg class="ic"><use href="#cube"/></svg></i><b class="t w12 ar"></b><i class="t w32 on"><svg class="ic"><use href="#ctr"/></svg></i><i class="t w30"><svg class="ic"><use href="#shd"/></svg></i><b class="t w12 ar"></b><i class="t w30"><svg class="ic"><use href="#wb"/></svg></i><b class="t w14 ar"></b><b class="s w4"></b>
<i class="t w32"><svg class="ic"><use href="#p1"/></svg></i><i class="t w32"><svg class="ic"><use href="#p2"/></svg></i><i class="t w31"><svg class="ic"><use href="#p3"/></svg></i><b class="t w10 ar lo"></b><b class="s w3"></b><b class="w2"></b><b class="gr w5"></b>
<i class="t w31"><svg class="ic"><use href="#c1"/></svg></i><i class="t w33"><svg class="ic"><use href="#c2"/></svg></i><b class="s w4"></b>
<i class="t w32"><svg class="ic"><use href="#pal"/></svg></i><i class="t w29"><svg class="ic"><use href="#d1"/></svg></i><i class="t w31"><svg class="ic"><use href="#d2"/></svg></i><i class="t w31"><svg class="ic"><use href="#d3"/></svg></i><i class="t w31"><svg class="ic"><use href="#d4"/></svg></i><b class="s w7"></b>
<i class="t w32"><svg class="ic"><use href="#rul"/></svg></i><i class="t w29"><svg class="ic"><use href="#ang"/></svg></i><b class="t w14 ar lo"></b><b class="s w1"></b>
</div>
<div class="tb">
<b class="gr w6"></b>
<i class="t w28"><svg class="ic"><use href="#sk"/></svg></i><i class="t w34"><svg class="ic"><use href="#ln"/></svg></i><i class="t w30"><svg class="ic"><use href="#arc"/></svg></i><i class="t w32"><svg class="ic"><use href="#ply"/></svg></i><b class="t w10 ar"></b><i class="t w30"><svg class="ic"><use href="#spl"/></svg></i><b class="t w16 ar"></b><i class="t w28"><svg class="ic"><use href="#law"/></svg></i><b class="t w14 ar"></b><b class="t w8 ar lo"></b><b class="s w5"></b><b class="gr w7"></b>
<i class="t w32"><svg class="ic"><use href="#rc"/></svg></i><b class="t w12 ar"></b><i class="t w30"><svg class="ic"><use href="#gs"/></svg></i><b class="t w14 ar"></b><b class="s w3"></b>
<i class="t w32"><svg class="ic"><use href="#w1"/></svg></i><i class="t w32"><svg class="ic"><use href="#w2"/></svg></i><i class="t w30"><svg class="ic"><use href="#w3"/></svg></i><i class="t w32"><svg class="ic"><use href="#w4"/></svg></i><b class="t w12 ar"></b><i class="t w28"><svg class="ic"><use href="#w5"/></svg></i><b class="t w18 ar"></b><b class="s w2"></b>
<i class="t w32"><svg class="ic"><use href="#gr"/></svg></i><b class="t w10 ar lo"></b><b class="s w3"></b>
<b class="w66"></b>
<b class="gr w8"></b>
<i class="t w28"><svg class="ic"><use href="#t1"/></svg></i><i class="t w32"><svg class="ic"><use href="#t2"/></svg></i><b class="t w14 ar"></b><i class="t w30"><svg class="ic"><use href="#t3"/></svg></i><b class="s w4"></b>
<i class="t w34"><svg class="ic"><use href="#t4"/></svg></i><b class="t w12 ar"></b><b class="s w3"></b>
<i class="t w34"><svg class="ic"><use href="#t5"/></svg></i><b class="t w12 ar lo"></b><b class="s w2"></b><b class="gr w9"></b>
<i class="t w30"><svg class="ic"><use href="#t6"/></svg></i><b class="s w3"></b>
<i class="t w34"><svg class="ic"><use href="#t7"/></svg></i><b class="t w12 ar lo"></b><b class="s w2"></b>
<b class="w125"></b>
<b class="gr w10"></b>
<i class="t w26"><svg class="ic"><use href="#t8"/></svg></i><b class="t w18 ar"></b><i class="t w26"><svg class="ic"><use href="#dp"/></svg></i><b class="t w16 ar"></b><b class="t w8 ar lo"></b><b class="s w3"></b>
</div>
<div class="tb">
<b class="gr w6"></b>
<i class="t w28"><svg class="ic"><use href="#a1"/></svg></i><i class="t w32"><svg class="ic"><use href="#a2"/></svg></i><i class="t w32"><svg class="ic"><use href="#a3"/></svg></i><b class="t w10 ar lo"></b><b class="s w3"></b><b class="gr w8"></b>
<i class="t w32"><svg class="ic"><use href="#tag"/></svg></i><b class="t w12 ar lo"></b><b class="s w2"></b><b class="gr w7"></b>
<i class="t w32"><svg class="ic"><use href="#b1"/></svg></i><i class="t w30"><svg class="ic"><use href="#b2"/></svg></i><i class="t w32"><svg class="ic"><use href="#b3"/></svg></i><i class="t w30"><svg class="ic"><use href="#b4"/></svg></i><i class="t w32"><svg class="ic"><use href="#b6"/></svg></i><i class="t w30"><svg class="ic"><use href="#b7"/></svg></i><i class="t w34"><svg class="ic"><use href="#b5"/></svg></i><b class="t w8 ar lo"></b><b class="s w3"></b>
</div>
</div>

<div class="selbar">
<div class="dd d1">没有选择过滤器<b class="ddb"></b></div>
<div class="dd d2">整个装配<b class="ddb"></b></div>
<i class="t w32"><svg class="sm"><use href="#lnk"/></svg></i><b class="s w1 cut"></b>
<i class="t w24"><svg class="sm"><use href="#flt"/></svg></i><b class="t w8 ar"></b><i class="t w23"><svg class="sm"><use href="#bk"/></svg></i><i class="t w25"><svg class="sm"><use href="#sc"/></svg></i><i class="t w23"><svg class="sm"><use href="#lc"/></svg></i><i class="t w23"><svg class="sm"><use href="#lv"/></svg></i><b class="s w3"></b>
<i class="t w24"><svg class="sm"><use href="#dr"/></svg></i><b class="t w16 ar"></b><b class="s w2"></b>
<i class="t w26"><svg class="sm"><use href="#sel"/></svg></i>
</div>
<div class="cue"><div class="cuemsg">选择对象并使用 <span class="mb">MB3</span>，或者双击某一对象</div><div class="cuer"></div></div>

<div class="main">
<div class="tabs">
<div class="tab"><svg class="tic"><use href="#t_a"/></svg></div>
<div class="tab act"><svg class="tic"><use href="#t_b"/></svg></div>
<div class="tab"><svg class="tic"><use href="#t_c"/></svg></div>
<div class="tab far"><svg class="tic"><use href="#t_d"/></svg></div>
<div class="tab far"><svg class="tic"><use href="#t_e"/></svg></div>
<div class="tab near"><svg class="tic"><use href="#t_f"/></svg></div>
<div class="tab near"><svg class="tic"><use href="#t_g"/></svg></div>
<div class="tab near"><svg class="tic"><use href="#t_h"/></svg></div>
<div class="tab near"><svg class="tic"><use href="#t_i"/></svg></div>
</div>

<div class="panel">
<div class="ptitle"><svg class="pin"><use href="#pin"/></svg><div class="ptext">部件导航器</div></div>
<div class="tree">
<div class="thead"><div class="th1">名称<b class="sort"></b></div><div class="th2">附注</div></div>
<div class="tbody">
<div class="tlist">
<div class="row"><span class="nm"><span class="c0"></span><svg class="fo"><use href="#fold2"/></svg>用户表达式</span><span class="nt"></span></div>
<div class="row"><span class="nm"><span class="c0 ex"><b class="minus"></b></span><svg class="fo"><use href="#fold2"/></svg>模型历史记录</span><span class="nt"></span></div>
<div class="row"><span class="nm"><span class="c1"></span><svg class="ck"><use href="#ck"/></svg><svg class="ti"><use href="#csy"/></svg>基准坐标系<i class="m mg">(0)</i></span><span class="nt"></span></div>
<div class="row"><span class="nm"><span class="c1"></span><svg class="ck"><use href="#ck"/></svg><svg class="ti"><use href="#sk"/></svg>草图<i class="m mg">(1) "SKETCH_...</i></span><span class="nt"></span></div>
<div class="row"><span class="nm"><span class="c1"></span><svg class="ck"><use href="#ck"/></svg><svg class="ti"><use href="#dp"/></svg>固定基准平面<i class="m mg">(2)</i></span><span class="nt"></span></div>
<div class="row"><span class="nm"><span class="c1"></span><svg class="ck"><use href="#ck"/></svg><svg class="ti"><use href="#sk"/></svg>草图<i class="m mg">(6) "SKETCH_...</i></span><span class="nt"></span></div>
<div class="row"><span class="nm"><span class="c1"></span><svg class="ck"><use href="#ck"/></svg><svg class="ti"><use href="#sk"/></svg>草图<i class="m mg">(7) "SKETCH_...</i></span><span class="nt"></span></div>
<div class="row"><span class="nm"><span class="c1"></span><svg class="ck"><use href="#ck"/></svg><svg class="ti"><use href="#dp"/></svg>固定基准平面<i class="m mg">(8)</i></span><span class="nt"></span></div>
<div class="row"><span class="nm"><span class="c1"></span><svg class="ck"><use href="#ck"/></svg><svg class="ti"><use href="#sk"/></svg>草图<i class="m mg">(9) "SKETCH_...</i></span><span class="nt"></span></div>
<div class="row"><span class="nm"><span class="c1"></span><svg class="ck"><use href="#ck"/></svg><svg class="ti"><use href="#mc"/></svg>镜像曲线<i class="m mg">(11)</i></span><span class="nt"></span></div>
<div class="row"><span class="nm"><span class="c1"></span><svg class="ck"><use href="#ck"/></svg><svg class="ti"><use href="#ms"/></svg>通过曲线网格<i class="m mg">(13)</i></span><span class="nt"></span></div>
<div class="row"><span class="nm"><span class="c1"></span><svg class="ck"><use href="#ck"/></svg><svg class="ti"><use href="#sk"/></svg>草图<i class="m mg">(14) "SKETCH...</i></span><span class="nt"></span></div>
<div class="row"><span class="nm"><span class="c1"></span><svg class="ck"><use href="#ck"/></svg><svg class="ti"><use href="#bp"/></svg>有界平面<i class="m mg">(15)</i></span><span class="nt"></span></div>
<div class="row"><span class="nm"><span class="c1"></span><svg class="ck"><use href="#ck"/></svg><svg class="ti"><use href="#mb"/></svg>镜像体<i class="m mg">(16)</i></span><span class="nt"></span></div>
<div class="row"><span class="nm"><span class="c1"></span><svg class="ck"><use href="#ck"/></svg><svg class="ti"><use href="#tr"/></svg>修剪的片体<i class="m mg">(17)</i></span><span class="nt"></span></div>
<div class="row"><span class="nm"><span class="c1"></span><svg class="ck"><use href="#ck"/></svg><svg class="ti"><use href="#tr"/></svg>修剪的片体<i class="m mg">(18)</i></span><span class="nt"></span></div>
</div>
<div class="vs"><b class="up"></b><div class="vth"><b class="vg"></b></div><b class="dn"></b></div>
</div>
<div class="hs"><b class="lf"></b><div class="hth"><b class="hg"></b></div><b class="rt"></b></div>
</div>
<div class="split"><b class="hdl"></b></div>
<div class="sec">相关性<span class="chv"><svg class="cs"><use href="#chu"/></svg></span></div>
<div class="rel">
<div class="rlist">
<div class="rr"></div><div class="rr"></div><div class="rr"></div><div class="rr"></div><div class="rr"></div><div class="rr"></div><div class="rr"></div><div class="rr"></div><div class="rr"></div><div class="rr"></div><div class="rr"></div><div class="rr"></div><div class="rr"></div><div class="rr"></div>
</div>
<div class="rbtns">
<div class="rb act2"><svg class="ic22"><use href="#mg"/></svg></div>
<div class="rb"><svg class="ic22"><use href="#rarr"/></svg></div>
<div class="rb"><svg class="ic22"><use href="#larr"/></svg></div>
<div class="rb"><svg class="ic22"><use href="#tre"/></svg></div>
</div>
</div>
<div class="sec s2">细节<span class="chv"><svg class="cs"><use href="#chd"/></svg></span></div>
<div class="sec s3">预览<span class="chv"><svg class="cs"><use href="#chd"/></svg></span></div>
</div>

<div class="view">
<svg class="scene" viewBox="315 180 1212 773">
<defs>
<radialGradient id="surfg" gradientUnits="userSpaceOnUse" cx="620" cy="1560" r="1230"><stop offset="0" stop-color="#ffff00"/><stop offset=".3" stop-color="#eeee00"/><stop offset=".5" stop-color="#c8c600"/><stop offset=".68" stop-color="#9a9400"/><stop offset=".85" stop-color="#726e00"/><stop offset="1" stop-color="#6a6800"/></radialGradient>
<clipPath id="surfc"><path d="M800 115C900 92 1000 85 1100 108L1165 140C1290 170 1420 250 1532 372C1440 480 1340 590 1290 670C1220 770 1140 960 1110 1212C1010 1335 860 1450 700 1505C620 1535 530 1540 440 1522C340 1500 270 1460 225 1400C190 1340 190 1250 230 1175L385 950C400 800 470 620 560 450C640 320 720 230 800 140Z"/></clipPath>
</defs>
<g transform="translate(620 340) scale(.4592 .37)">
<path d="M790 100C600 320 300 700 205 1150L215 1175 400 960C370 800 470 540 800 140Z" fill="#cc7a00"/>
<path d="M385 945L207 1165C165 1260 170 1370 225 1435C300 1505 450 1530 600 1542C730 1530 860 1470 1000 1355L1132 1212L1100 1190Z" fill="#6b4300"/>
<path d="M790 100C650 270 400 560 368 880L375 945L392 935L400 860C450 650 600 380 800 145Z" fill="#e58d00" stroke="#33260a" stroke-width="2.500"/>
<path d="M378 942L392 935L408 810L440 720L395 790Z" fill="#ffb000"/>
<path d="M800 148C690 270 600 380 520 530" fill="none" stroke="#6b4300" stroke-width="8"/>
<path d="M1532 372L1552 405C1450 535 1335 665 1275 765C1215 875 1165 1040 1136 1210L1108 1212C1140 960 1220 770 1290 670C1340 590 1440 480 1532 372Z" fill="#b87200"/>
<path d="M1548 408C1450 533 1332 663 1272 763C1212 873 1162 1040 1134 1208" fill="none" stroke="#6b4300" stroke-width="15"/>
<path d="M1524 402C1430 525 1312 655 1254 755C1192 870 1146 1040 1122 1205" fill="none" stroke="#e48a00" stroke-width="14"/>
<path d="M1175 950C1150 1040 1135 1120 1125 1205" fill="none" stroke="#ffae00" stroke-width="14"/>
<path d="M800 115C900 92 1000 85 1100 108L1165 140C1290 170 1420 250 1532 372C1440 480 1340 590 1290 670C1220 770 1140 960 1110 1212C1010 1335 860 1450 700 1505C620 1535 530 1540 440 1522C340 1500 270 1460 225 1400C190 1340 190 1250 230 1175L385 950C400 800 470 620 560 450C640 320 720 230 800 140Z" fill="url(#surfg)"/>
<g clip-path="url(#surfc)">
<g fill="#6b4400">
<path d="M565 565L660 630 600 720 610 820 650 830 720 760 805 690 965 705 905 820 960 785 925 860 800 865 650 840 530 780 450 700 480 640Z"/>
<path d="M810 505L860 480 1000 340 1130 250 1170 150 1100 210 1000 300 905 380Z"/>
<path d="M1000 412L1090 270 1130 250 1240 280 1200 330 1060 400 1030 410Z"/>
<path d="M1172 450L1240 310 1280 298 1385 385 1295 345 1245 335 1195 450Z"/>
<path d="M1135 140L1350 225 1290 300 1240 310 1160 190Z"/>
<path d="M675 325L725 280 775 310 725 365Z"/>
<path d="M698 450L750 400 775 420 745 482Z"/>
<path d="M745 300L860 200 965 208 1040 100 1120 110 1000 230 860 200 790 265Z"/>
<path d="M830 190L860 140 950 105 1040 95 1000 150 900 160Z"/>
<path d="M965 555L1010 520 1050 500 1015 565Z"/>
<path d="M860 530L950 500 875 538Z"/>
<path d="M1285 490L1390 460 1440 465 1400 520 1350 550 1300 540 1285 580Z"/>
<path d="M1125 505L1180 450 1285 490 1250 545Z"/>
<path d="M1235 680L1260 640 1290 645 1270 690Z"/>
<path d="M1420 330L1450 290 1430 335Z"/>
<path d="M1460 370L1490 320 1480 360Z"/>
</g>
<g fill="#dd8800">
<path d="M1190 780L1230 760 1200 840 1160 950 1120 1060 1100 1150 1110 1212 1020 1280 1020 1240 1060 1180 1070 1090 1110 960 1140 880Z"/>
<path d="M200 1260L280 1140 260 1190 240 1240 225 1340 215 1400 190 1300Z"/>
<path d="M295 1180L330 1205 420 1250 520 1275 615 1290 600 1315 580 1315 580 1345 550 1345 550 1375 520 1375 520 1410 480 1410 480 1440 450 1440 450 1470 420 1470 420 1505 340 1470 350 1420 330 1420 330 1360 320 1360 320 1300 305 1300 305 1260Z"/>
<path d="M670 1290L800 1260 770 1300 800 1315 900 1270 915 1275 880 1330 870 1420 780 1470 700 1500 680 1450 690 1400 660 1390Z" fill="#f09000"/>
</g>
<path d="M230 1400L260 1480 300 1440 340 1500 380 1490 420 1520 300 1520Z" fill="#f09000"/>
<path d="M430 1500L470 1470 510 1520 560 1490 620 1530 400 1540Z" fill="#f0a000"/>
<g fill="#d8d000">
<path d="M1150 950L1165 935 1160 965 1140 975ZM1110 1070L1125 1060 1115 1095 1100 1100ZM1060 1215L1085 1190 1075 1225 1050 1240ZM1200 800L1215 790 1200 825 1185 835Z"/>
</g>
<g fill="none" stroke="#b86a00" stroke-width="2" stroke-dasharray="2 14">
<path d="M400 1000C600 1120 900 1040 1110 900"/>
<path d="M350 1100C560 1250 950 1180 1100 1000"/>
<path d="M420 880C620 960 950 890 1190 720"/>
</g>
</g>
<path d="M790 100C900 62 1000 58 1100 96L1160 120C1290 142 1430 245 1542 366L1552 405 1530 398 1532 372C1420 250 1290 170 1165 140L1100 108C1000 85 900 92 800 115L802 145 788 135Z" fill="#ffb800" stroke="#33260a" stroke-width="2.500"/>
<g fill="none" stroke="#8a8878" stroke-width="3.500" stroke-dasharray="22 7 4 7">
<path d="M805 150L817 455 1180 578 1165 150"/>
<path d="M817 455L385 950"/>
<path d="M1180 578L640 1210 385 1500"/>
</g>
<g fill="none" stroke="#7d7350" stroke-width="3.500" stroke-dasharray="22 7 4 7">
<path d="M385 1500L25 1375 195 1175"/>
<path d="M370 690V615L490 480"/>
<path d="M385 950L750 1085"/>
</g>
<g fill="none" stroke="#3f63ff" stroke-width="3.200">
<path d="M802 105L798 10 185 722 205 1165"/>
<path d="M1162 140C1050 270 950 390 880 480C780 610 690 710 620 830C520 990 460 1130 440 1240C420 1330 400 1420 385 1500"/>
<path d="M800 140C690 270 600 380 560 450C470 620 400 800 385 950L230 1140C190 1240 190 1340 225 1400C270 1460 340 1500 440 1522C530 1540 620 1535 700 1505C860 1450 1010 1335 1110 1212"/>
<path d="M800 112C900 90 1000 85 1100 105L1165 138C1290 170 1420 250 1532 372"/>
</g>
<path d="M1532 372C1440 480 1340 590 1290 670C1220 770 1140 960 1110 1212" fill="none" stroke="#e000c0" stroke-width="3.500"/>
<path d="M1068 413L1285 488 1292 750 1078 677Z" fill="#008a8a" fill-opacity=".32" stroke="#008a8a" stroke-width="3.500"/>
<path d="M440 760L450 1008 327 1152 322 1030 385 950Z" fill="#008a8a" fill-opacity=".32" stroke="#008a8a" stroke-width="3.500"/>
<g fill="none" stroke="#0a14e0" stroke-width="3.500">
<path d="M748 1085L740 925"/>
<path d="M740 860L752 915Q740 930 728 915ZM728 910H752"/>
<path d="M560 1018L605 1022Q625 1030 610 1050ZM605 1022L612 1050"/>
<path d="M635 1213L665 1168Q680 1170 676 1190ZM665 1168L676 1190"/>
<path d="M748 1085L620 1040" stroke-dasharray="10 7"/>
<path d="M748 1085L690 1150" stroke-dasharray="10 7"/>
<path d="M650 1040V945L735 965M650 1040L640 1070M735 965L725 990M690 1010L660 1040M688 1045V1150M605 1105L615 1122L655 1138" stroke-dasharray="24 14"/>
</g>
</g>
<text class="wlab" x="959" y="653">Z</text><text class="wlab" x="873" y="716">Y</text>
<g fill="none" stroke-width="1.300"><path d="M369 895V869" stroke="#1a1ad0"/><path d="M369 895L343 890" stroke="#18a038"/><path d="M369 895L353 912" stroke="#d01818"/></g>
<circle cx="369" cy="895" r="2.500" fill="#aaa"/>
<text class="axl bl" x="366" y="869">Z</text><text class="axl gn" x="336" y="891">Y</text><text class="axl rd" x="348" y="917">X</text>
</svg>
</div>
</div>

<div class="btm">
<b class="gr w6"></b><b class="w2"></b>
<div class="dd d3">标准<b class="ddb"></b></div><b class="w5"></b>
<i class="t w31 on2"><svg class="ic"><use href="#z1"/></svg></i><i class="t w31 on2"><svg class="ic"><use href="#z2"/></svg></i><i class="t w31 on2"><svg class="ic"><use href="#z3"/></svg></i><b class="s w4"></b>
<i class="t w34"><svg class="ic"><use href="#pal"/></svg></i><b class="t w8 ar lo"></b><b class="s w5"></b><b class="gr w8"></b>
<i class="t w30"><svg class="ic"><use href="#e1"/></svg></i><i class="t w30"><svg class="ic"><use href="#e2"/></svg></i><i class="t w32"><svg class="ic"><use href="#e3"/></svg></i><i class="t w32"><svg class="ic"><use href="#e4"/></svg></i><b class="s w3"></b>
<i class="t w34"><svg class="ic"><use href="#f1"/></svg></i><i class="t w28"><svg class="ic"><use href="#f2"/></svg></i><b class="s w6"></b>
<i class="t w36"><svg class="ic"><use href="#g1"/></svg></i><b class="t w14 ar"></b><b class="s w5"></b>
<i class="t w36"><svg class="ic"><use href="#h1"/></svg></i><i class="t w29"><svg class="ic"><use href="#h2"/></svg></i><b class="s w4"></b>
<i class="t w32"><svg class="ic"><use href="#i1"/></svg></i><i class="t w32"><svg class="ic"><use href="#i2"/></svg></i><b class="t w20 ar"></b><b class="t w8 ar lo"></b><b class="s w6"></b><b class="gr w13"></b>
<i class="t w30"><svg class="ic"><use href="#j1"/></svg></i><i class="t w32"><svg class="ic"><use href="#j2"/></svg></i><i class="t w32"><svg class="ic"><use href="#j3"/></svg></i><i class="t w30"><svg class="ic"><use href="#j4"/></svg></i><i class="t w32 on2"><svg class="ic"><use href="#j5"/></svg></i><i class="t w30"><svg class="ic"><use href="#j6"/></svg></i><i class="t w32"><svg class="ic"><use href="#j7"/></svg></i><i class="t w30"><svg class="ic"><use href="#j8"/></svg></i><i class="t w30"><svg class="ic"><use href="#j9"/></svg></i><b class="s w5"></b>
<i class="t w32"><svg class="ic"><use href="#k1"/></svg></i><b class="s w5"></b>
<i class="t w34"><svg class="ic"><use href="#k2"/></svg></i><i class="t w30"><svg class="ic"><use href="#k3"/></svg></i><b class="s w3"></b>
<i class="t w38"><svg class="ic"><use href="#k4"/></svg></i><b class="t w8 ar lo"></b>
</div>

<div class="wm">
<svg class="wmlogo" viewBox="0 0 72 82"><path d="M36 0L72 20 54 14C44 8 30 6 16 10Z" fill="#cfe8f6"/><path d="M50 8L72 20V48C70 30 62 18 50 8Z" fill="#8fd2f4"/><path d="M72 42V62L50 74C62 66 70 54 72 42Z" fill="#72c2ec"/><path d="M18 56C32 68 52 72 72 56V62L36 82 18 72Z" fill="#6fc6f0"/><path d="M0 42C4 52 10 62 22 70L0 62Z" fill="#92d4f4"/><path d="M0 20L36 0C18 8 4 24 0 42Z" fill="#b4def4"/><path d="M16 12C30 6 44 8 54 14L40 20 20 32 16 46 0 62V34Z" fill="#b4def4" fill-opacity=".9"/><path d="M36 14L58 27V52L36 65 14 52V27Z" fill="#e3e5e7"/><path d="M36 25L50 33 36 41 22 33Z" fill="#cbe8f8"/><path d="M22 33L36 41V58L22 50Z" fill="#8dd0f2"/><path d="M50 33L36 41V58L50 50Z" fill="#72c0ea"/></svg>
<div class="wmt"><div class="wm1">3D世界网</div><div class="wm2">WWW.3DSJW.COM</div></div>
</div>
</body>
</html>
```

FILE: styles.css
```css
*{box-sizing:border-box}
html,body{margin:0;padding:0}
body{width:1527px;height:986px;overflow:hidden;position:relative;font:12px/1.2 "Noto Sans CJK SC","Noto Sans",sans-serif;color:#1c1c1c;background:#d8d8d8}
i,em{font-style:normal}
b{display:block;flex:none}
.defs{display:block;width:0;height:0;overflow:hidden;position:absolute}
.gl{font:8px "Liberation Sans",sans-serif}
.blk{height:4px;background:#111}
.menubar{height:24px;display:flex;align-items:center;background:linear-gradient(#efefef,#dfdfdf);border-bottom:1px solid #b8b8b8;padding-left:5px}
.mi{width:18px;height:18px;flex:none;margin-right:4px}
.mn{width:55px;flex:none;white-space:nowrap;font-size:12px}
.mn em{font:10px "Liberation Mono",monospace;letter-spacing:-.5px}
.mn2{width:67px;margin-left:-1px}
.mn3{width:55px}

.bars{height:103px;background:linear-gradient(#e6e6e6,#cbcbcb);border-bottom:1px solid #8e8e8e;box-shadow:inset 0 -2px 2px -1px #b0b0b0}
.tb{height:34px;display:flex;align-items:stretch}
.t{display:flex;align-items:center;justify-content:center;flex:none}
.w1{width:1px}.w2{width:2px}.w3{width:3px}.w4{width:4px}.w5{width:5px}.w6{width:6px}.w7{width:7px}.w8{width:8px}.w9{width:9px}.w10{width:10px}.w11{width:11px}.w12{width:12px}.w13{width:13px}.w14{width:14px}.w16{width:16px}.w18{width:18px}.w20{width:20px}.w23{width:23px}.w24{width:24px}.w25{width:25px}.w26{width:26px}.w28{width:28px}.w29{width:29px}.w30{width:30px}.w31{width:31px}.w32{width:32px}.w33{width:33px}.w34{width:34px}.w36{width:36px}.w38{width:38px}.w66{width:66px}.w125{width:125px}
.ic{width:26px;height:26px;display:block}
.sm{width:18px;height:18px;display:block}
.ic22{width:22px;height:22px;display:block}
.st{font-size:12px;justify-content:flex-end}
.gr{background:repeating-linear-gradient(#9a9a9a 0 2px,#fff0 2px 4px) 1px 5px/2px 23px no-repeat}
.s{border-right:1px solid #f6f6f6;box-shadow:inset -1px 0 #b4b4b4;margin:1px 0}
.ar::after{content:"";border:3.500px solid transparent;border-top:4px solid #111;border-bottom:0}
.lo{padding-top:18px}
.on{background:#fff;border:1px solid #555;border-radius:4px;margin:1px 0}
.on2{background:linear-gradient(#fdfdfd,#e6e6e6);border:1px solid #555;border-radius:4px;margin:3px 0 0}

.selbar{height:26px;display:flex;align-items:center;background:linear-gradient(#e4e4e4,#d8d8d8);border-bottom:1px solid #f4f4f4}
.selbar .t{height:100%}
.selbar .s{height:100%}
.dd{height:17px;background:#fff;border:1px solid #555;border-radius:3px;position:relative;flex:none;font-size:12px;line-height:15px;padding-left:1px;white-space:nowrap;overflow:hidden}
.d1{width:109px;margin-left:3px}
.d2{width:115px;margin-left:9px}
.d3{width:80px}
.ddb{position:absolute;right:0;top:0;bottom:0;width:17px;background:linear-gradient(#e8f0ff,#4f90e0);border-left:1px solid #6a8ab0}
.ddb::after{content:"";position:absolute;left:3px;top:4px;border:5px solid transparent;border-top:6px solid #0a1020;border-bottom:0}
.cut{height:100%}
.cue{height:23px;display:flex;background:linear-gradient(#e6e6e6,#d4d4d4);border-bottom:1px solid #a0a0a0;align-items:center}
.cuemsg{width:917px;height:100%;font-weight:700;font-size:13px;line-height:22px;border-right:1px solid #f4f4f4;white-space:nowrap}
.mb{font:700 12px "Liberation Mono",monospace}

.main{height:773px;display:flex}
.tabs{width:30px;flex:none;background:#a9a9a9;padding-top:17px}
.tab{height:40px;margin-left:3px;border:1px solid #777;border-right:0;border-radius:5px 0 0 5px;background:linear-gradient(#ececec,#cfcfcf);display:flex;align-items:center;justify-content:center}
.tab.act{height:45px;margin-left:1px;background:#f0f0f0;margin-bottom:1px}
.tab.far{margin-top:14px}
.tab.near{margin-top:2px}
.tic{width:23px;height:24px;display:block}
.panel{width:285px;flex:none;background:#ebebeb;border-right:3px solid #6e6e6e;padding:9px 8px 0 9px;height:771px;box-shadow:inset -1px 0 #fff}
.ptitle{display:flex;align-items:center;height:22px}
.pin{width:13px;height:13px;margin-left:5px;flex:none}
.ptext{margin-left:7px;flex:1;height:22px;margin-right:2px;font-weight:700;font-size:13px;line-height:18px;padding-left:4px;background:linear-gradient(#f6f6f6,#f0f0f0 45%,#dadada);border:1px solid #d0d0d0;border-top-color:#fff;border-left-color:#fff;border-bottom-color:#999}
.tree{margin-top:4px;height:358px;margin-right:2px;width:262px;border:1px solid #6f6f6f;background:#f4f4f4}
.thead{display:flex;height:17px;background:linear-gradient(#f8f8f8,#dedede);border-bottom:1px solid #a0a0a0;font-size:12px;line-height:16px}
.th1{width:201px;padding-left:7px;border-right:1px solid #888;display:flex;align-items:center}
.th2{flex:1;padding-left:5px}
.sort{margin-left:15px;border:5px solid transparent;border-bottom:6px solid #222;border-top:0}
.tbody{display:flex;height:321px}
.tlist{width:243px;flex:none}
.row{height:20px;display:flex;border-bottom:1px solid #e8e8e8;background:#fff}
.row:nth-child(odd){background:#f5f5f5}
.nm{width:200px;flex:none;display:flex;align-items:center;white-space:nowrap;font-size:12px;line-height:22px;color:#222;overflow:hidden}
.nt{flex:1;border-left:1px solid #e4e4e4}
.c0{width:19px;height:100%;flex:none;background:repeating-linear-gradient(90deg,#999 0 1px,#0000 1px 2px) 9px 10px/9px 1px no-repeat,repeating-linear-gradient(#999 0 1px,#0000 1px 2px) 9px 0/1px 100% no-repeat;position:relative}
.ex{background:repeating-linear-gradient(#999 0 1px,#0000 1px 2px) 9px 0/1px 6px no-repeat}
.minus{position:absolute;left:5px;top:5px;width:9px;height:9px;border:1px solid #777;background:linear-gradient(90deg,#333,#333) center/5px 1px no-repeat #f4f4f4}
.c1{width:40px;height:100%;flex:none;background:repeating-linear-gradient(90deg,#999 0 1px,#0000 1px 2px) 29px 10px/10px 1px no-repeat,repeating-linear-gradient(#999 0 1px,#0000 1px 2px) 29px 0/1px 100% no-repeat}
.fo{width:18px;height:15px;flex:none;margin-right:1px}
.ck{width:13px;height:13px;flex:none}
.ti{width:17px;height:17px;flex:none;margin:0 1px 0 2px}
.m{font:10px "Liberation Mono",monospace;color:#333;letter-spacing:-.2px}
.mg{margin-left:8px}
.vs{width:17px;flex:none;background:#f0f0f0;position:relative;padding-top:58px}
.up,.dn{position:absolute;left:5px;border:3.500px solid transparent}
.up{top:6px;border-bottom:4px solid #333;border-top:0}
.dn{bottom:5px;border-top:4px solid #333;border-bottom:0}
.vth{height:216px;margin:0 1px;background:linear-gradient(90deg,#fafafa,#dcdcdc);border:1px solid #999;border-radius:2px;display:flex;align-items:center;justify-content:center}
.vg{width:7px;height:7px;background:repeating-linear-gradient(#555 0 1px,#0000 1px 3px)}
.hs{height:18px;background:#f0f0f0;display:flex;align-items:center;position:relative;padding-left:19px}
.lf,.rt{position:absolute;top:5px;border:3.500px solid transparent}
.lf{left:7px;border-right:4px solid #333;border-left:0}
.rt{right:24px;border-left:4px solid #333;border-right:0}
.hth{width:165px;height:15px;background:linear-gradient(#fafafa,#cfcfcf);border:1px solid #999;border-radius:2px;display:flex;align-items:center;justify-content:center}
.hg{width:7px;height:7px;background:repeating-linear-gradient(90deg,#555 0 1px,#0000 1px 3px)}
.split{height:12px;display:flex;align-items:center;justify-content:center;background:linear-gradient(#fff,#fff) center/262px 1px no-repeat;width:262px}
.hdl{width:48px;height:6px;background:linear-gradient(#f4f4f4,#c8c8c8);border:1px solid #b0b0b0;margin-top:3px}
.sec{height:22px;width:262px;display:flex;align-items:stretch;justify-content:space-between;font-weight:700;font-size:13px;line-height:20px;padding-left:6px;background:linear-gradient(#f6f6f6,#f4f4f4 45%,#dcdcdc 55%,#d6d6d6);border-bottom:1px solid #8a8a8a}
.chv{width:23px;border-left:1px solid #999;display:flex;align-items:center;justify-content:center;box-shadow:inset 1px 0 #fff}
.cs{width:15px;height:15px}
.rel{height:295px;width:262px;background:#c4c4c4;padding:5px 0 0 7px;display:flex;border-bottom:1px solid #eee}
.rlist{width:215px;height:283px;border:1px solid #666;background:#fff;overflow:hidden;flex:none}
.rr{height:20px;border-bottom:1px solid #e4e4e4;background:#fff}
.rr:nth-child(even){background:#f5f5f5}
.rbtns{margin-left:3px;padding-top:1px;display:flex;flex-direction:column;gap:4px}
.rb{width:30px;height:30px;background:linear-gradient(#f2f2f2,#dedede);border:1px solid #aaa;border-radius:4px;display:flex;align-items:center;justify-content:center}
.act2{border-color:#555;background:linear-gradient(#fafafa,#dcdcdc)}
.s2{height:23px}
.s3{height:23px}

.view{flex:1;background:linear-gradient(#b3b5b7,#d5d6d8 50%,#e6e7e9 88%);border-top:1px solid #888}
.scene{width:1212px;height:773px;display:block}
.wlab{font:700 8px "Liberation Sans",sans-serif;fill:#0a14e0}
.axl{font:7px "Liberation Sans",sans-serif}
.bl{fill:#1a1ad0}.gn{fill:#18a038}.rd{fill:#d01818}

.btm{height:33px;display:flex;align-items:stretch;background:linear-gradient(#ececec,#d2d2d2);border-top:1px solid #fff}
.btm .dd{align-self:center;margin-top:2px}
.wm{position:absolute;left:1244px;top:891px;display:flex;pointer-events:none}
.wmlogo{width:72px;height:82px;display:block}
.wmt{margin:12px 0 0 7px;color:#f4f5f7}
.wm1{font:700 42px/42px "Liberation Sans","Noto Sans CJK SC",sans-serif;white-space:nowrap;opacity:.85}
.wm2{font:13px/14px "Liberation Sans",sans-serif;letter-spacing:3.600px;margin-top:2px;white-space:nowrap;color:#fff;opacity:.8}
```
